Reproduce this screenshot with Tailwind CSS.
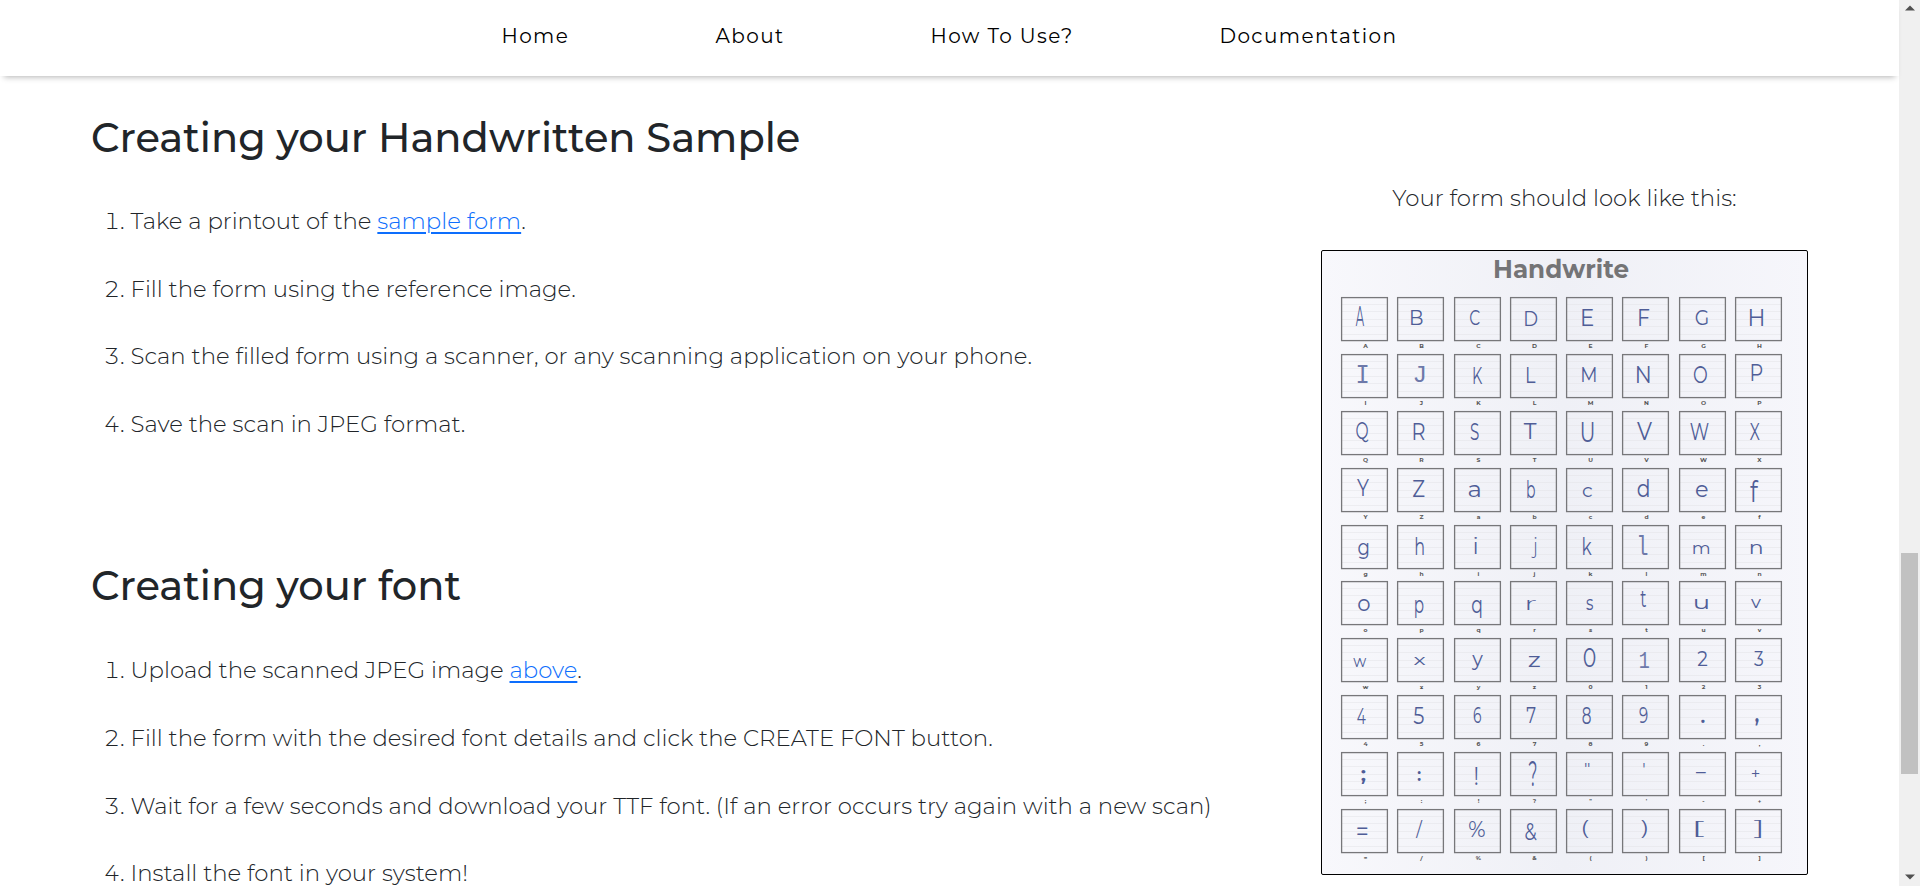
<!DOCTYPE html>
<html lang="en">
<head>
<meta charset="utf-8">
<title>Handwrite</title>
<script src="https://cdn.jsdelivr.net/npm/@tailwindcss/browser@4"></script>
</head>
<body class="flex h-[886px] w-[1920px] overflow-hidden bg-white font-['Montserrat','Inter',sans-serif] text-[#212529]">
<div class="flex w-[1899px] flex-col">
  <nav class="relative h-[76px] w-full shrink-0 bg-white shadow-[0_5px_6px_-4px_rgba(0,0,0,0.3)]">
    <ul class="flex h-[72px] items-center pl-[501.5px] text-[20px] font-normal tracking-[1.4px] whitespace-nowrap text-black">
      <li class="w-[214px]">Home</li>
      <li class="w-[215px]">About</li>
      <li class="w-[289px]">How To Use?</li>
      <li>Documentation</li>
    </ul>
  </nav>
  <main class="flex">
    <div class="w-[1321px] shrink-0 pt-[38px] pl-[91px]">
      <section>
        <h2 class="text-[40px] leading-[48px] font-medium">Creating your Handwritten Sample</h2>
        <ol class="mt-[26px] ml-[39.5px] list-decimal text-[22.82px] leading-[67.6px] font-light whitespace-nowrap">
          <li>Take a printout of the <a class="text-[#0d6efd] underline decoration-2 underline-offset-[3px]">sample form</a>.</li>
          <li>Fill the form using the reference image.</li>
          <li>Scan the filled form using a scanner, or any scanning application on your phone.</li>
          <li>Save the scan in JPEG format.</li>
        </ol>
      </section>
      <section class="mt-[104px]">
        <h2 class="text-[40px] leading-[48px] font-medium">Creating your font</h2>
        <ol class="mt-[27px] ml-[39.5px] list-decimal text-[22.82px] leading-[67.6px] font-light whitespace-nowrap">
          <li>Upload the scanned JPEG image <a class="text-[#0d6efd] underline decoration-2 underline-offset-[3px]">above</a>.</li>
          <li>Fill the form with the desired font details and click the CREATE FONT button.</li>
          <li>Wait for a few seconds and download your TTF font. (If an error occurs try again with a new scan)</li>
          <li>Install the font in your system!</li>
        </ol>
      </section>
    </div>
    <aside class="w-[487px] shrink-0 pt-[106px]">
      <p class="text-center text-[22.85px] leading-8 font-light whitespace-nowrap">Your form should look like this:</p>
      <div class="mt-9 h-[625px] rounded-[2px] border border-black bg-linear-to-r from-[#f8f8fc] via-[#eff0f6] to-[#f6f6fb]">
        <div class="h-[46px] pt-[4px] pr-[7px] text-center text-[24.6px] leading-[28px] font-bold text-[#747476]">Handwrite</div>
        <div id="sheet" class="ml-[19px] grid grid-cols-[repeat(8,47px)] gap-x-[9.25px]"></div>
      </div>
    </aside>
  </main>
</div>
<div class="flex w-[21px] flex-col items-center bg-[#f0f0f0]">
  <svg class="mt-[5px] h-[6px] w-[10px] shrink-0" viewBox="0 0 10 6"><path d="M0 5.5L5 .5l5 5z" fill="#505050"/></svg>
  <div class="mt-[542px] h-[221px] w-[17px] shrink-0 bg-[#c1c1c1]"></div>
  <svg class="mt-[100px] h-[6px] w-[10px] shrink-0" viewBox="0 0 10 6"><path d="M0 .5l5 5 5-5z" fill="#505050"/></svg>
</div>
<script>
// Each entry: character, then the ink box (left, top, right, bottom) in thirds of a pixel.
const glyphs = `A 44 28 69 88|B 42 38 76 83|C 48 40 77 86|D 46 42 82 87|E 49 37 81 87|F 52 37 82 88|G 50 40 86 86|H 45 35 84 86
I 50 35 80 88|J 52 37 82 86|K 59 37 85 90|L 51 40 76 88|M 49 41 89 84|N 45 36 82 87|O 45 35 84 88|P 50 32 82 82
Q 46 33 82 93|R 50 35 83 86|S 50 37 74 88|T 41 38 79 85|U 47 34 82 93|V 45 31 90 86|W 34 35 89 86|X 45 35 74 86
Y 48 34 84 84|Z 48 34 82 86|a 44 52 77 89|b 52 34 75 90|c 50 59 78 89|d 47 35 80 89|e 51 53 86 89|f 46 34 71 103
g 52 55 82 104|h 56 34 80 89|i 61 38 69 87|j 64 38 79 102|k 51 35 77 90|l 51 31 76 90|m 43 59 90 87|n 47 57 80 87
o 51 54 86 90|p 54 57 79 109|q 54 54 82 109|r 52 55 78 86|s 61 54 81 89|t 55 31 72 80|u 48 57 86 86|v 48 54 78 82
w 37 58 76 86|x 50 58 85 81|y 53 54 87 97|z 56 54 89 86|0 53 33 88 88|1 54 41 81 89|2 55 39 84 84|3 57 39 84 84
4 49 38 74 86|5 50 35 80 87|6 59 35 81 85|7 50 35 76 83|8 49 35 74 87|9 52 35 76 85|. 67 75 77 86|, 61 70 71 92
; 61 54 73 95|: 62 59 71 88|! 63 45 70 101|? 56 27 79 104|" 57 36 70 48|' 64 35 68 48|- 51 61 81 65|+ 51 54 73 75
= 49 53 79 76|/ 56 35 76 86|% 45 37 92 84|& 46 43 80 95|( 51 35 68 86|) 57 35 74 86|[ 50 36 75 85|] 57 32 78 86`.split(/[|\n]/);
const ctx = document.createElement('canvas').getContext('2d');
const NS = 'http://www.w3.org/2000/svg';
function add(svg, ch, attrs) {
  const t = document.createElementNS(NS, 'text');
  for (const k in attrs) t.setAttribute(k, attrs[k]);
  t.textContent = ch;
  svg.append(t);
}
glyphs.forEach(entry => {
  const [ch, ...b] = entry.split(' ');
  const [l, t, r, d] = b.map(n => n / 3);
  const family = 'IJ1l'.includes(ch) ? 'Liberation Mono' : 'Montserrat';
  const weight = '[]()ijr'.includes(ch) ? 300 : '.,;:'.includes(ch) ? 600 : 400;
  ctx.font = `${weight} 100px "${family}"`;
  const m = ctx.measureText(ch);
  const sx = (r - l) / (m.actualBoundingBoxRight + m.actualBoundingBoxLeft);
  const sy = (d - t) / (m.actualBoundingBoxAscent + m.actualBoundingBoxDescent);
  const svg = document.createElementNS(NS, 'svg');
  svg.setAttribute('viewBox', '0 0 47 56.9');
  svg.setAttribute('class', 'block h-[56.9px] w-[47px] overflow-visible');
  svg.innerHTML = '<path d="M1 7.5h45M1 14.5h45M1 22.5h45M1 29.5h45M1 37.5h45" stroke="#e2e2e7" stroke-width=".5"/><rect x=".6" y=".6" width="45.8" height="43" fill="none" stroke="#77777a" stroke-width="1.3"/>';
  add(svg, ch, { 'font-family': family, 'font-weight': weight, 'font-size': 100, fill: family === 'Montserrat' ? '#4f5d97' : '#6d79aa',
    transform: `translate(${l + m.actualBoundingBoxLeft * sx} ${t + m.actualBoundingBoxAscent * sy}) scale(${sx} ${sy})` });
  add(svg, ch, { 'font-family': 'Montserrat', 'font-weight': 700, 'font-size': 6, fill: '#555', 'text-anchor': 'middle', x: 24.5, y: 51.3 });
  document.getElementById('sheet').append(svg);
});
</script>
</body>
</html>
